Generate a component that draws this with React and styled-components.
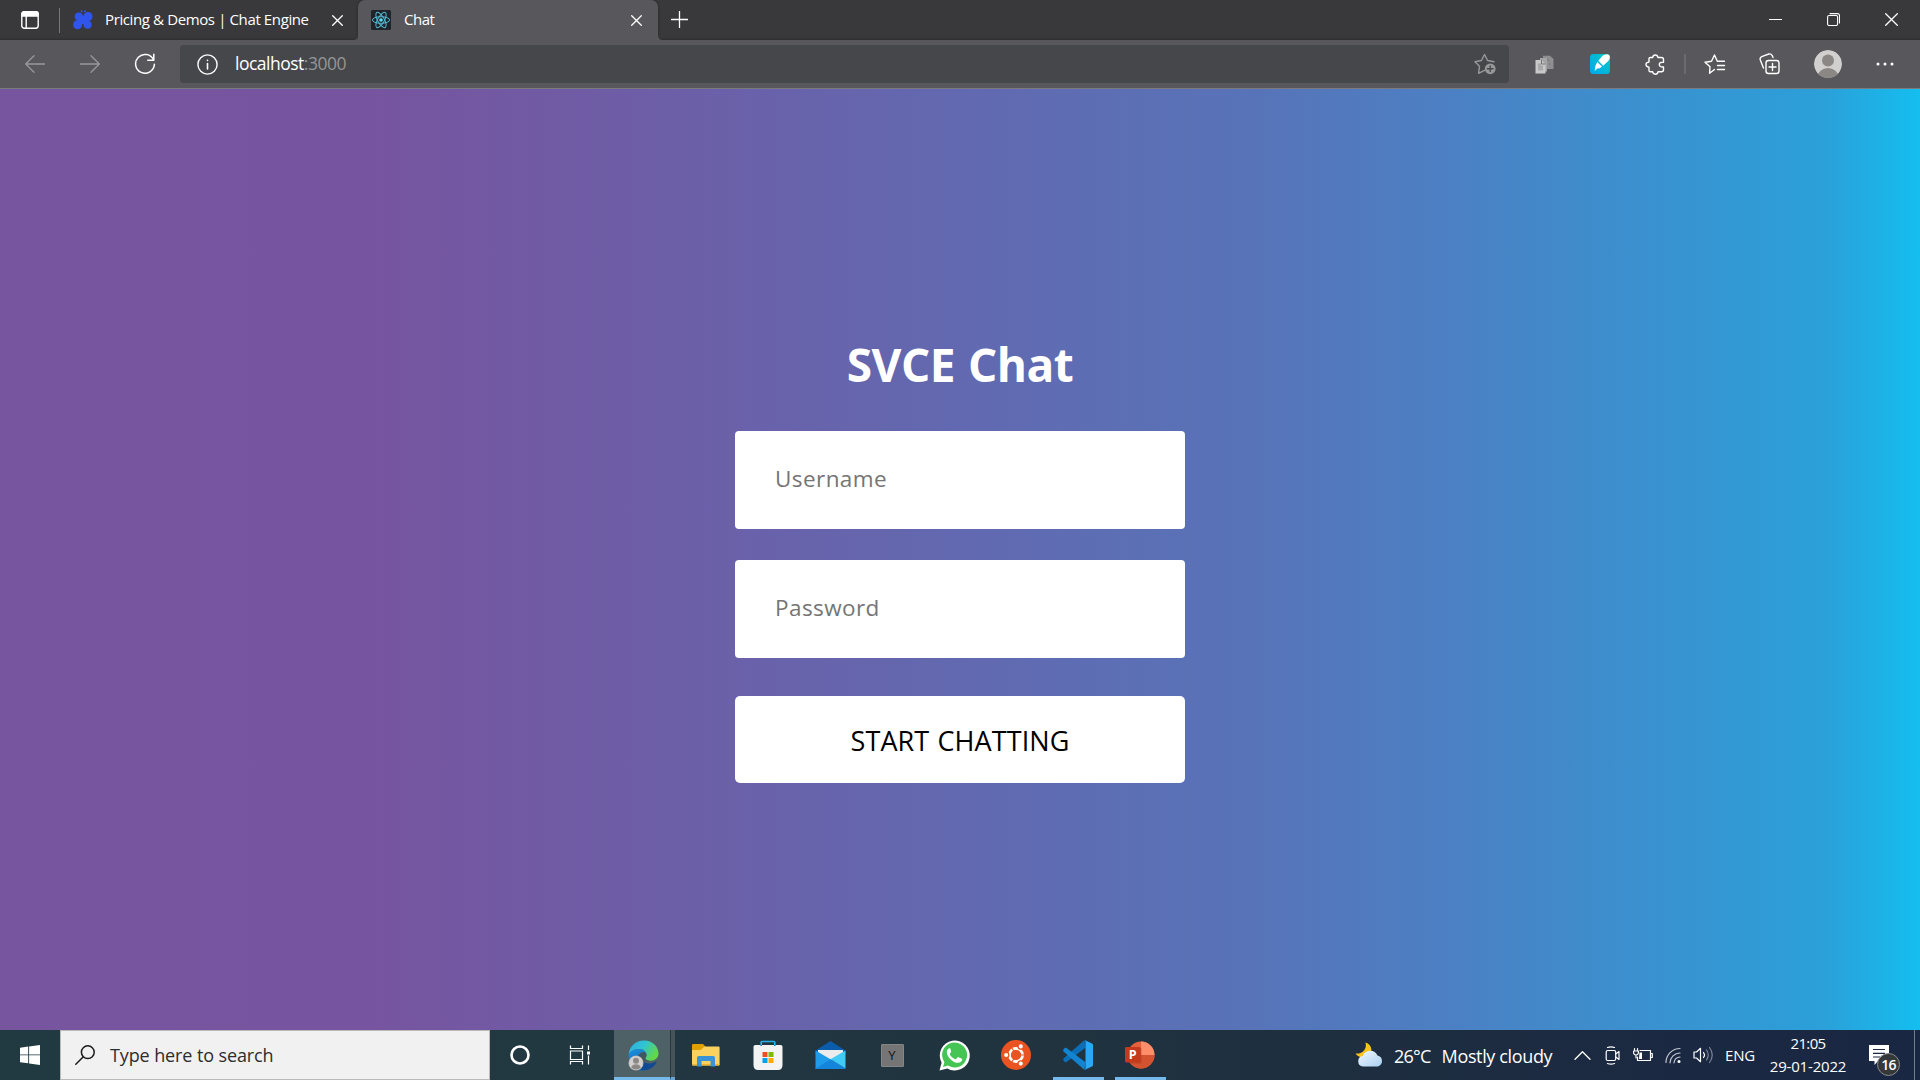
import React from "react";
import styled, { createGlobalStyle, css } from "styled-components";

const ui = `"Open Sans", "Noto Sans", sans-serif`;

const GlobalStyle = createGlobalStyle`
  * { box-sizing: border-box; }
  html, body { margin: 0; padding: 0; overflow: hidden; }
  body { font-family: ${ui}; }
  svg { display: block; flex: none; }
`;

const Screen = styled.div`
  display: flex;
  flex-direction: column;
  width: 1920px;
  height: 1080px;
  overflow: hidden;
`;

const Label = styled.span`
  display: block;
  white-space: pre;
  font-family: ${ui};
  font-size: ${(p) => p.$size}px;
  letter-spacing: ${(p) => p.$track || 0}px;
  line-height: ${(p) => p.$line || 24}px;
  color: ${(p) => p.$color || "#ffffff"};
`;

/* ---------- browser chrome ---------- */

const TabStrip = styled.header`
  display: flex;
  height: 40px;
  flex: none;
  background: linear-gradient(#39393c 0 37px, #333336 39px, #2d2d2f 40px);
`;

const Cell = styled.div`
  display: flex;
  align-items: center;
  justify-content: center;
  flex: none;
  width: ${(p) => p.$w}px;
  height: ${(p) => (p.$h ? `${p.$h}px` : "100%")};
`;

const StripDivider = styled.div`
  width: 1px;
  height: 25px;
  margin-top: 8px;
  background: #77777a;
`;

const Tab = styled.div`
  display: flex;
  align-items: center;
  flex: none;
  height: 40px;
  width: ${(p) => p.$w}px;
  padding: 0 ${(p) => p.$right}px 0 13px;
  ${(p) =>
    p.$active &&
    css`
      background: #58585c;
      border-radius: 7px 7px 0 0;
      box-shadow: 0 0 3px #2a2a2c;
    `}
`;

const TabTitle = styled(Label)`
  flex: 1;
  margin-left: ${(p) => p.$gap}px;
  padding-bottom: 2px;
`;

const Spacer = styled.div`
  flex: 1;
`;

const Toolbar = styled.nav`
  display: flex;
  align-items: flex-start;
  flex: none;
  height: 49px;
  padding: 5px 8px 0 7px;
  background: #58585c;
  border-bottom: 1px solid #7b7b7d;
`;

const AddressBar = styled.div`
  display: flex;
  align-items: center;
  width: 1329px;
  height: 38px;
  margin: 0 7px 0 8px;
  padding: 0 13px 0 17px;
  border-radius: 4px;
  background: #46474a;
`;

const Url = styled(Label)`
  flex: 1;
  margin-left: 17px;
  padding-bottom: 2px;
`;

const Port = styled.span`
  color: #949597;
`;

const ToolDivider = styled.div`
  width: 2px;
  height: 20px;
  margin: 9px 2px 0 1px;
  background: #6b6b6e;
`;

/* ---------- login page ---------- */

const Page = styled.main`
  display: flex;
  flex-direction: column;
  align-items: center;
  height: 941px;
  flex: none;
  background: linear-gradient(
    90deg,
    rgb(119, 85, 159) 0%,
    rgb(119, 84, 159) 19%,
    rgb(88, 115, 184) 65%,
    rgb(78, 126, 194) 74%,
    rgb(43, 160, 217) 95%,
    rgb(20, 190, 239) 100%
  );
`;

const Form = styled.form`
  display: flex;
  flex-direction: column;
  align-items: stretch;
  width: 450px;
  padding-top: 243px;
`;

const Title = styled.h1`
  margin: 0 0 35px;
  text-align: center;
  font-size: 46px;
  line-height: 64px;
  font-weight: 700;
  letter-spacing: -0.5px;
  word-spacing: 1.5px;
  color: #ffffff;
`;

const Field = styled.input`
  height: 98px;
  margin: 0 0 31px;
  padding: 0 40px 3px;
  border: 0;
  border-radius: 4px;
  outline: 0;
  background: #ffffff;
  font-family: ${ui};
  font-size: 22.5px;
  letter-spacing: 0.42px;
  color: #000;
  &::placeholder {
    color: #757575;
    opacity: 1;
  }
`;

const Submit = styled.button`
  height: 87px;
  margin: 7px 0 0;
  padding: 1px 0 0;
  border: 0;
  border-radius: 5px;
  background: #ffffff;
  font-family: ${ui};
  font-size: 27px;
  letter-spacing: 0.1px;
  word-spacing: 1px;
  color: #000000;
`;

/* ---------- taskbar ---------- */

const Taskbar = styled.footer`
  display: flex;
  flex: none;
  height: 50px;
  background: linear-gradient(90deg, #213a41 0%, #223841 30%, #20333f 55%, #1d2d40 75%, #1b2842 88%, #1a2742 100%);
`;

const SearchBox = styled.div`
  display: flex;
  align-items: center;
  width: 430px;
  height: 50px;
  padding: 0 14px;
  border: 1px solid #b9b9b9;
  background: #f1f1f1;
`;

const SearchText = styled(Label)`
  margin-left: 15px;
`;

const AppCell = styled.div`
  display: flex;
  flex-direction: column;
  align-items: center;
  justify-content: center;
  flex: none;
  width: 62px;
  height: 50px;
`;

const EdgeCell = styled.div`
  display: flex;
  flex: none;
  width: 65px;
  height: 50px;
  padding-left: 4px;
`;

const EdgeMain = styled.div`
  display: flex;
  align-items: center;
  justify-content: center;
  width: 56px;
  padding: 3px 0 0 4px;
  background: #4e6167;
  border-bottom: 3px solid #76b9ed;
`;

const EdgeStack = styled.div`
  width: 5px;
  background: #445459;
  border-left: 1px solid #28373d;
  border-bottom: 3px solid #6aa4d0;
`;

const RunningCell = styled(AppCell)`
  justify-content: flex-start;
  padding: 10px 0 0 0;
  &::after {
    content: "";
    width: 51px;
    height: 3px;
    margin-top: 7px;
    background: #76b9ed;
  }
`;

const YTile = styled.div`
  width: 23px;
  height: 23px;
  border-radius: 1px;
  background: #757575;
  border: 1px solid #858585;
  color: #141414;
  font: 13px/21px ${ui};
  text-align: center;
`;

const Weather = styled.div`
  display: flex;
  align-items: center;
  flex: none;
  width: 213px;
  height: 50px;
`;

const WeatherText = styled(Label)`
  margin-left: ${(p) => p.$gap}px;
  padding-top: 1px;
`;

const Clock = styled.div`
  width: 96px;
  height: 50px;
  padding: 2px 4px 0 0;
  text-align: center;
`;

const Notifications = styled.div`
  position: relative;
  width: 56px;
  height: 50px;
  padding: 15px 0 0 11px;
`;

const Badge = styled.span`
  position: absolute;
  left: 19px;
  top: 23px;
  width: 23px;
  height: 23px;
  border: 1px solid #8a8c8c;
  border-radius: 50%;
  background: #353839;
  color: #fff;
  font: 600 14px/21px ${ui};
  letter-spacing: -0.8px;
  text-align: center;
`;

const PeekEdge = styled.div`
  width: 6px;
  height: 50px;
  border-left: 1px solid #747d8c;
`;

const Line = ({ w = 20, h = 20, box, stroke = "#fff", sw = 1.3, children }) => (
  <svg
    width={w}
    height={h}
    viewBox={box || `0 0 ${w} ${h}`}
    fill="none"
    stroke={stroke}
    strokeWidth={sw}
    strokeLinecap="round"
    strokeLinejoin="round"
  >
    {children}
  </svg>
);

const CloseIcon = ({ s = 11 }) => (
  <Line w={s} h={s} sw={1.3}>
    <path d={`M.7.7 ${s - 0.7} ${s - 0.7}M${s - 0.7}.7.7 ${s - 0.7}`} />
  </Line>
);

const TabActionsIcon = () => (
  <Line w={18} h={18} sw={1.4}>
    <rect x=".8" y=".8" width="16.4" height="16.4" rx="2.4" />
    <path d="M1 2.6Q1 1 2.6 1H15.4Q17 1 17 2.6V5H1Z" fill="#fff" />
    <path d="M5.2 5V17" />
  </Line>
);

const ButterflyIcon = () => (
  <svg width="20" height="20" viewBox="0 0 20 20" fill="#2f55ee">
    <circle cx="8.6" cy="1.200" r="1" />
    <circle cx="12" cy="1.200" r="1" />
    <circle cx="5.800" cy="6.500" r="4.100" />
    <circle cx="15" cy="6.500" r="4.500" />
    <circle cx="4.600" cy="14.800" r="4.500" />
    <circle cx="14.600" cy="14.800" r="4" />
    <path d="M6 4.500 10.200 6 14 4 16 9 13.500 17 10 13.500 6.500 17 4 10Z" />
  </svg>
);

const ReactIcon = () => (
  <svg width="20" height="20" viewBox="0 0 20 20">
    <rect width="20" height="20" rx="1.5" fill="#20232a" />
    <g fill="none" stroke="#53b9d1" strokeWidth="1">
      <ellipse cx="10" cy="10" rx="8.6" ry="3.3" />
      <ellipse cx="10" cy="10" rx="8.600" ry="3.3" transform="rotate(60 10 10)" />
      <ellipse cx="10" cy="10" rx="8.600" ry="3.3" transform="rotate(120 10 10)" />
    </g>
    <circle cx="10" cy="10" r="1.8" fill="#61dafb" />
  </svg>
);

const TabFoot = styled.svg`
  align-self: flex-end;
  margin-${(p) => p.$side}: -5px;
`;

const EdgeLogo = () => (
  <svg width="32" height="31" viewBox="0 0 32 31">
    <defs>
      <linearGradient id="edgeTop" x1="0" y1="0" x2="1" y2=".5">
        <stop offset="0" stopColor="#2fa9e8" />
        <stop offset=".5" stopColor="#30c4d2" />
        <stop offset="1" stopColor="#63d846" />
      </linearGradient>
      <linearGradient id="edgeSwirl" x1="0" y1="0" x2=".4" y2="1">
        <stop offset="0" stopColor="#1b93dd" />
        <stop offset="1" stopColor="#0c63ba" />
      </linearGradient>
    </defs>
    <path d="M.7 15A15 15 0 0 1 16 .5C25 .5 30.500 7 30.500 13.300c0 4.700-3.600 7.500-7.800 7.500-3.500 0-5.400-1.400-5.400-2.300 0-.8 1.200-1.300 1.200-3.500C18.500 12 15.500 9 11 9 6 9 2 11.500.7 15Z" fill="url(#edgeTop)" />
    <path d="M.7 15C2 11.500 6 9 11 9c4.500 0 7.500 3 7.500 6 0-1.300-1.800-2.700-4-2.700-3 0-4.500 2.700-4.500 5.200 0 6 6 11.500 12.500 9.500-2 2.500-5 3.500-7.500 3.500A15 15 0 0 1 .7 15Z" fill="url(#edgeSwirl)" />
    <path d="M14.500 12.500c-2.500 1-3 5-.5 8 3.500 4 9.500 3.500 13.500 1.200.7-.4 1.300.2.900.9C25.500 28 20 31 14.500 30 9 28 7.500 16 14.500 12.500Z" fill="#104a92" />
    <path d="M14.500 12.500c2.500-1 4 1 4 2.500 0 2-1.200 2.700-1.200 3.500s1.500 2.100 4 2.300c-6 1.300-8.800-2.800-8.600-5.300.1-1.500.8-2.500 1.800-3Z" fill="#42565d" />
    <circle cx="8" cy="23" r="7.600" fill="#aaa9a7" />
    <circle cx="8" cy="23" r="6.900" fill="#d2d0cd" />
    <circle cx="8" cy="20.800" r="3" fill="#8c8885" />
    <path d="M3.200 27.500a5 4.500 0 0 1 9.600 0A7 7 0 0 1 3.200 27.500Z" fill="#8c8885" />
  </svg>
);

const ExplorerLogo = () => (
  <svg width="28" height="24" viewBox="0 0 28 24">
    <path d="M0 2.200Q0 1 1.200 1H11l2.400 2.600V9H0Z" fill="#e0a100" />
    <path d="M0 7H8.500l4.200-3.400H26.600q1 0 1 1V21.600q0 1-1 1H1q-1 0-1-1Z" fill="#fbd25f" />
    <path d="M0 21H27.600v.8q0 .8-1 .8H1q-1 0-1-.8Z" fill="#eeb52f" />
    <path d="M5 23.500V14.800Q5 13 6.800 13H21.200Q23 13 23 14.800V23.500H18.500V18H9.500V23.500Z" fill="#3a92d8" />
  </svg>
);

const StoreLogo = () => (
  <svg width="30" height="30" viewBox="0 0 30 30">
    <path d="M8.200 5.500V2.500Q8.200 1.500 9.200 1.500H20.800Q21.800 1.500 21.800 2.500V5.500" fill="none" stroke="#25b5ee" strokeWidth="1.700" />
    <path d="M.5 6.800Q.5 5 2.300 5H27.700Q29.500 5 29.500 6.800V25Q29.500 30 25 30H5Q.5 30 .5 25Z" fill="#f3f3f3" />
    <path d="M8.200 5v1M21.800 5v1" stroke="#168dcc" strokeWidth="1.700" />
    <path d="M9.500 12h5v5h-5Z" fill="#f04e22" />
    <path d="M15.500 12h5v5h-5Z" fill="#7fb900" />
    <path d="M9.500 18h5v5h-5Z" fill="#00a2ed" />
    <path d="M15.500 18h5v5h-5Z" fill="#ffa900" />
  </svg>
);

const MailLogo = () => (
  <svg width="31" height="28" viewBox="0 0 31 28">
    <path d="M.5 9.500 15.500 0 30.500 9.500V14H.5Z" fill="#0b5cab" />
    <path d="M3 9H28V14L15.500 20 3 14Z" fill="#ececec" />
    <path d="M.5 9.500 15.500 18.300 30.500 28H.5Z" fill="#1e9ce9" />
    <path d="M30.500 9.500V27.500L15.500 18.300Z" fill="#3fcbf5" />
    <path d="M15.500 18.300 30.500 27.500V28H.5V27.500Z" fill="#1585dc" />
  </svg>
);

const WhatsAppLogo = () => (
  <svg width="31" height="31" viewBox="0 0 31 31">
    <path d="M.500 30.500 2.600 22.700A15 15 0 1 1 8.300 28.500Z" fill="#fff" />
    <path d="M4 27 5.400 22.200A12.500 12.500 0 1 1 9 25.600Z" fill="#45c654" />
    <path d="M10.500 8.200c-.8 0-2.700 1.300-2.700 3.700 0 5 6.200 10.900 11.400 10.900 2.200 0 4-1.600 4-3 0-.8-.2-.9-.7-1.200l-3-1.400c-.5-.2-.8 0-1.100.4l-1.200 1.500c-.3.3-.6.3-1 .1-2.500-1-4.200-2.500-5.400-4.700-.2-.4-.1-.7.200-1l.9-1.200c.3-.4.3-.6.100-1L11.500 8.700c-.2-.4-.5-.5-1-.5Z" fill="#fff" />
  </svg>
);

const UbuntuLogo = () => (
  <svg width="30" height="30" viewBox="0 0 30 30">
    <circle cx="15" cy="15" r="15" fill="#e95420" />
    <circle cx="15" cy="15" r="6.500" fill="none" stroke="#fff" strokeWidth="2.900" />
    <path d="M15 15 24.500 15M15 15 10.200 6.700M15 15 10.200 23.300" stroke="#e95420" strokeWidth="1.100" />
    <g stroke="#e95420" strokeWidth="1.300" fill="#fff">
      <circle cx="5.200" cy="15" r="2.700" />
      <circle cx="19.800" cy="6.400" r="2.700" />
      <circle cx="19.800" cy="23.600" r="2.700" />
    </g>
    <circle cx="15" cy="15" r="5" fill="#e95420" />
  </svg>
);

const CodeLogo = () => (
  <svg width="30" height="30" viewBox="0 0 30 30">
    <path d="M.5 18.500 21.500 0 22.500 7.800 3.200 22.200Q2.500 22.600 1.800 22L.6 20.800Q0 20 .5 18.500Z" fill="#0a6fb8" />
    <path d="M.5 11.500Q0 10 .6 9.200L1.800 8Q2.500 7.400 3.200 7.800L22.500 22.200 21.500 30Z" fill="#1384cf" />
    <path d="M21.500 0 29 3.400Q30 4 30 5V25Q30 26 29 26.600L21.500 30Q22.500 29.500 22.500 28V2Q22.500.500 21.500 0Z" fill="#2aa8f5" />
  </svg>
);

const PowerPointLogo = () => (
  <svg width="30" height="30" viewBox="0 0 30 30">
    <circle cx="16" cy="15" r="13.500" fill="#e7603c" />
    <path d="M16 1.500A13.500 13.500 0 0 1 29.500 15H16Z" fill="#ff8f6b" />
    <path d="M29.500 15A13.500 13.500 0 0 1 2.500 15Z" fill="#d35230" />
    <path d="M8 8h8.500v15.500H6Z" fill="#a93a20" opacity=".5" />
    <rect x="0" y="7" width="15.500" height="15.500" rx="1.400" fill="#c43a1c" />
    <text x="7.800" y="19.300" textAnchor="middle" fontFamily={ui} fontSize="12.500" fontWeight="700" fill="#fff">
      P
    </text>
  </svg>
);

export default function App() {
  return (
    <Screen>
      <GlobalStyle />
      <TabStrip>
        <Cell $w={59} $h={40}>
          <TabActionsIcon />
        </Cell>
        <StripDivider />
        <Tab $w={298} $right={15}>
          <Cell $w={20} $h={20}>
            <ButterflyIcon />
          </Cell>
          <TabTitle $size={15} $track={-0.38} $gap={12}>
            Pricing &amp; Demos | Chat Engine
          </TabTitle>
          <CloseIcon />
        </Tab>
        <TabFoot $side="left" width="5" height="5" viewBox="0 0 5 5">
          <path d="M5 0V5H0Q5 5 5 0Z" fill="#58585c" />
        </TabFoot>
        <Tab $w={300} $right={16} $active>
          <ReactIcon />
          <TabTitle $size={15} $track={-0.49} $gap={13}>
            Chat
          </TabTitle>
          <CloseIcon />
        </Tab>
        <TabFoot $side="right" width="5" height="5" viewBox="0 0 5 5">
          <path d="M0 0V5H5Q0 5 0 0Z" fill="#58585c" />
        </TabFoot>
        <Cell $w={43} $h={39}>
          <Line w={17} h={17} sw={1.3}>
            <path d="M8.500.5V16.500M.5 8.500H16.500" />
          </Line>
        </Cell>
        <Spacer />
        <Cell $w={58} $h={39}>
          <Line w={13} h={13} sw={1.2}>
            <path d="M.5 6.500H12.500" />
          </Line>
        </Cell>
        <Cell $w={58} $h={39}>
          <Line w={13} h={13} sw={1.1}>
            <rect x=".6" y="2.500" width="10" height="10" rx="1.500" />
            <path d="M3 .6H10.500Q12.500.6 12.500 2.600V10" />
          </Line>
        </Cell>
        <Cell $w={58} $h={39}>
          <CloseIcon s={13} />
        </Cell>
      </TabStrip>

      <Toolbar>
        <Cell $w={55} $h={37}>
          <Line w={20} h={18} stroke="#98989b">
            <path d="M19.500 9H.7M9 .8.7 9 9 17.200" />
          </Line>
        </Cell>
        <Cell $w={55} $h={37}>
          <Line w={20} h={18} stroke="#98989b">
            <path d="M.5 9H19.300M11 .8 19.300 9 11 17.200" />
          </Line>
        </Cell>
        <Cell $w={55} $h={38}>
          <Line w={22} h={22} sw={1.5}>
            <path d="M19.600 7A9.400 9.400 0 1 0 20.400 11.300M19.800 1.300V7.200H13.800" />
          </Line>
        </Cell>
        <AddressBar>
          <Line w={21} h={21} sw={1.4}>
            <circle cx="10.500" cy="10.500" r="9.600" />
            <path d="M10.500 9.500V15M10.500 6.300V6.500" strokeWidth="1.600" />
          </Line>
          <Url $size={17.5} $track={-0.5}>
            localhost<Port>:3000</Port>
          </Url>
          <Line w={22} h={22} stroke="#97989a" sw={1.4}>
            <path d="M10.500 17.300 4.600 20.300 5.500 13.300 1 8.700 7.400 7.500 10.500 1.500 13.600 7.500 20 8.700" />
            <circle cx="16.200" cy="15.800" r="5.400" fill="#97989a" stroke="none" />
            <path d="M16.200 13V18.600M13.400 15.800H19" stroke="#46474a" />
          </Line>
        </AddressBar>
        <Cell $w={56} $h={38}>
          <svg width="19" height="19" viewBox="0 0 19 19">
            <path d="M8 .8H15L18.500 4V14H8Z" fill="#8f8f91" />
            <path d="M5 3H12V16.500H5Z" fill="#a4a4a6" />
            <path d="M.5 5H6.500L10.500 9V18.500H.5Z" fill="#c9c9ca" />
            <path d="M3 8.500H6V10.500H8V15.500H3Z" fill="#a9a9ab" />
            <path d="M6.500 5V9H10.500M12.500 4 14 6M14 9H15.500" stroke="#707073" fill="none" />
          </svg>
        </Cell>
        <Cell $w={55} $h={38}>
          <svg width="20" height="20" viewBox="0 0 20 20">
            <defs>
              <linearGradient id="marker" x1="0" y1="1" x2="1" y2="0">
                <stop offset="0" stopColor="#00a8f0" />
                <stop offset="1" stopColor="#00c8c0" />
              </linearGradient>
            </defs>
            <rect width="20" height="20" rx="3.500" fill="url(#marker)" />
            <path d="M8.300 6.800 12.500 1.800Q14 .3 17 .3 19.700.3 19.800 3 19.800 5.600 18.300 7L13.200 11.700Z" fill="#fff" />
            <path d="M7.300 8 12 12.500 9.800 14.200 7.300 14.400 4.700 17 5.200 12.700 6 10.500Z" fill="#fff" />
          </svg>
        </Cell>
        <Cell $w={56} $h={38}>
          <Line w={20} h={21} sw={1.4}>
            <path d="M5.300 3.500H7.700Q8 1 10.300 1T12.900 3.500H16.500Q18.500 3.500 18.500 5.500V8.200Q14.300 8 14.300 10.600T18.500 13V15.800Q18.500 17.800 16.500 17.800H13Q12.700 20.200 10.300 20.200T7.700 17.800H5.300Q4 17.800 4 16.500V13.200Q1 13 1 10.600T4 8.100V4.800Q4 3.500 5.300 3.500Z" />
          </Line>
        </Cell>
        <ToolDivider />
        <Cell $w={54} $h={38}>
          <Line w={22} h={21} sw={1.4}>
            <path d="M10.500 15.500 5.600 19.300 6 12.700 1 8.200 7.500 7.200 10.500 1 13.300 7.200H20.500M13.500 11.500H20.500M13.500 15.500H20.500" />
          </Line>
        </Cell>
        <Cell $w={55} $h={38}>
          <Line w={21} h={22} sw={1.4}>
            <rect x="7" y="7.500" width="13" height="13" rx="2.500" />
            <path d="M13.500 10.500V17.500M10 14H17M4.500 15 1.300 7Q.6 4.700 2.700 3.700L9.800 1Q12 .4 13.200 2.600L14 4.500" />
          </Line>
        </Cell>
        <Cell $w={61} $h={38}>
          <svg width="28" height="28" viewBox="0 0 28 28">
            <defs>
              <clipPath id="face">
                <circle cx="14" cy="14" r="14" />
              </clipPath>
            </defs>
            <g clipPath="url(#face)">
              <circle cx="14" cy="14" r="14" fill="#d2d0ce" />
              <circle cx="14" cy="10.500" r="6" fill="#8b8784" />
              <ellipse cx="14" cy="27" rx="10.500" ry="9" fill="#8b8784" />
            </g>
          </svg>
        </Cell>
        <Cell $w={54} $h={37}>
          <svg width="18" height="4" viewBox="0 0 18 4" fill="#fff">
            <circle cx="2" cy="2" r="1.500" />
            <circle cx="9" cy="2" r="1.500" />
            <circle cx="16" cy="2" r="1.500" />
          </svg>
        </Cell>
      </Toolbar>

      <Page>
        <Form>
          <Title>SVCE Chat</Title>
          <Field placeholder="Username" />
          <Field placeholder="Password" />
          <Submit type="button">START CHATTING</Submit>
        </Form>
      </Page>

      <Taskbar>
        <Cell $w={60}>
          <svg width="20" height="20" viewBox="0 0 20 20" fill="#fff">
            <path d="M0 2.800 8.200 1.600V9.400H0ZM9.100 1.500 20 0V9.400H9.100ZM0 10.300H8.200V18.300L0 17.200ZM9.100 10.300H20V20L9.100 18.500Z" />
          </svg>
        </Cell>
        <SearchBox>
          <Line w={20} h={20} stroke="#1c1c1c" sw={1.5}>
            <circle cx="12.800" cy="7.200" r="6.400" />
            <path d="M8.300 11.700.8 19.200" />
          </Line>
          <SearchText $size={18} $track={-0.11} $color="#2d2d2d">
            Type here to search
          </SearchText>
        </SearchBox>
        <Cell $w={60}>
          <svg width="20" height="20" viewBox="0 0 20 20">
            <circle cx="10" cy="10" r="8.500" fill="none" stroke="#fff" strokeWidth="2.600" />
          </svg>
        </Cell>
        <Cell $w={60} $h={49}>
          <svg width="22" height="20" viewBox="0 0 22 20" fill="none" stroke="#fff" strokeWidth="1.200">
            <path d="M1.500.5V3.500H13.500V.5M1.500 19.500V16.500H13.500V19.500M1.500 6H13.500V14.500H1.500ZM19.500.5V5M19.500 10.500V19.500" />
            <path d="M18 6.500h3v3h-3Z" fill="#fff" stroke="none" />
          </svg>
        </Cell>
        <EdgeCell>
          <EdgeMain>
            <EdgeLogo />
          </EdgeMain>
          <EdgeStack />
        </EdgeCell>
        <AppCell>
          <ExplorerLogo />
        </AppCell>
        <AppCell>
          <StoreLogo />
        </AppCell>
        <AppCell>
          <MailLogo />
        </AppCell>
        <AppCell>
          <YTile>Y</YTile>
        </AppCell>
        <AppCell>
          <WhatsAppLogo />
        </AppCell>
        <AppCell>
          <UbuntuLogo />
        </AppCell>
        <RunningCell>
          <CodeLogo />
        </RunningCell>
        <RunningCell>
          <PowerPointLogo />
        </RunningCell>
        <Spacer />
        <Weather>
          <svg width="29" height="26" viewBox="0 0 29 26">
            <defs>
              <linearGradient id="cloud" x1="0" y1="0" x2="1" y2="1">
                <stop offset="0" stopColor="#f2f9fe" />
                <stop offset="1" stopColor="#a9d0f0" />
              </linearGradient>
            </defs>
            <path d="M10.500.5C16 2 18 8 15 12.500 11 17 3.500 16 .5 11.500 7 12.500 12.500 7 10.500.5Z" fill="#fcc419" />
            <path d="M8 24.500a5.300 5.300 0 0 1-.3-10.500A8 8 0 0 1 22.500 13.500a5.700 5.700 0 0 1 .5 11Z" fill="url(#cloud)" />
          </svg>
          <WeatherText $size={18} $track={-0.76} $gap={10}>
            26°C
          </WeatherText>
          <WeatherText $size={18} $track={-0.36} $gap={11}>
            Mostly cloudy
          </WeatherText>
        </Weather>
        <Cell $w={29}>
          <Line w={17} h={9} sw={1.3}>
            <path d="M1 8.300 8.500.8 16 8.300" />
          </Line>
        </Cell>
        <Cell $w={31}>
          <Line w={16} h={19} sw={1.2}>
            <rect x="1.200" y="4.500" width="9.500" height="10" rx="1.500" />
            <path d="M10.700 8 14 5.500V13.500L10.700 11M2.500 1.500Q6 .2 9.500 1.500M2.500 17.500Q6 18.800 9.500 17.500" />
          </Line>
        </Cell>
        <Cell $w={30}>
          <Line w={20} h={14} sw={1.2}>
            <path d="M7 2.500H17.500V12.500H4.500V9M17.500 5.500H19.300V9.500H17.500M1.500.6V3M4.500.6V3M.6 3H5.400V5.200Q5 7 3 7T.6 5.200ZM3 7V10" />
            <path d="M6.500 4.500H9V11H6Z" fill="#fff" stroke="none" />
          </Line>
        </Cell>
        <Cell $w={31}>
          <Line w={17} h={17} sw={1.200} stroke="#c3c8d0">
            <path d="M1 15.500A14 14 0 0 1 15 1.500M5 15.800A10 10 0 0 1 15 6M9 15.800A6 6 0 0 1 15 10" />
            <circle cx="14" cy="14.500" r="1.500" fill="#fff" stroke="none" />
          </Line>
        </Cell>
        <Cell $w={29}>
          <Line w={21} h={18} sw={1.200}>
            <path d="M1 6H3.500L7.500 2.300V15.700L3.500 12H1Z" />
            <path d="M10.500 6.500Q12.500 9 10.500 11.500" />
            <path d="M13.500 4Q17 9 13.500 14M16.500 1.500Q22 9 16.500 16.500" stroke="#7d8594" />
          </Line>
        </Cell>
        <Cell $w={44}>
          <Label $size={15} $track={-0.2}>
            ENG
          </Label>
        </Cell>
        <Clock>
          <Label $size={15} $track={-0.67} $line={23}>
            21:05
          </Label>
          <Label $size={15} $track={-0.19} $line={23}>
            29-01-2022
          </Label>
        </Clock>
        <Notifications>
          <svg width="20" height="20" viewBox="0 0 20 20">
            <path d="M0 0H20V16H9L5.500 20V16H0Z" fill="#fff" />
            <path d="M4 4.500H16M4 8.300H16M4 12H11" stroke="#1b2842" strokeWidth="1.200" />
          </svg>
          <Badge>16</Badge>
        </Notifications>
        <PeekEdge />
      </Taskbar>
    </Screen>
  );
}
